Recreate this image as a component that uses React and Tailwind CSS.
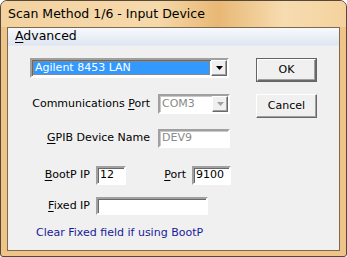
const font = { fontFamily: '"DejaVu Sans", Tahoma, sans-serif' };

const sunken =
  "border-2 border-t-[#a0a0a0] border-l-[#a0a0a0] border-b-white border-r-white shadow-[inset_1px_1px_0_#696969]";
const sunkenOff =
  "border-2 border-t-[#a0a0a0] border-l-[#a0a0a0] border-b-white border-r-white shadow-[inset_1px_1px_0_#c8c8c8]";

const Ul = ({ children }) => <span className="underline underline-offset-2">{children}</span>;

const Arrow = ({ off }) => (
  <div className="w-[16px] h-full flex items-center justify-center bg-[#f0f0f0] border border-t-white border-l-white border-b-[#696969] border-r-[#696969] shadow-[inset_-1px_-1px_0_#a0a0a0]">
    <svg width="7" height="4" viewBox="0 0 7 4">
      <path d="M0 0h7L3.5 4z" fill={off ? "#a0a0a0" : "#000"} />
    </svg>
  </div>
);

const Btn = ({ children, def }) => (
  <div
    className={`w-[61px] h-[24px] flex items-center justify-center text-[11px] text-black bg-[#f0f0f0] ${
      def ? "border border-[#646464]" : ""
    }`}
  >
    <div className="w-full h-full flex items-center justify-center border border-t-white border-l-white border-b-[#696969] border-r-[#696969] shadow-[inset_-1px_-1px_0_#a0a0a0]">
      {children}
    </div>
  </div>
);

export default function App() {
  return (
    <div
      style={font}
      className="w-[347px] h-[257px] flex flex-col bg-[#efc488] border border-[#55483a] rounded-t-[7px] rounded-b-[3px] overflow-hidden"
    >
      {/* title bar */}
      <div className="h-[26px] flex items-center pl-[7px] bg-[linear-gradient(90deg,#f3d2a0,#f6d9ab_45%,#e8b874_63%,#f7dcb1_82%,#f4d29d)]">
        <span className="text-[12.5px] text-black">Scan Method 1/6 - Input Device</span>
      </div>

      <div className="flex-1 flex px-[6px] pb-[5px]">
        <div className="flex-1 flex flex-col border border-[#7d6a4d] bg-[#f0f0f0]">
          {/* menu bar */}
          <div className="h-[18px] flex items-center pl-[7px] bg-[linear-gradient(180deg,#f7f9fc,#dfe6f3)] border-b border-[#e6e9f0]">
            <span className="text-[12.5px] text-black">
              <Ul>A</Ul>dvanced
            </span>
          </div>

          <div className="flex-1 flex text-[11px] text-black">
            {/* left column */}
            <div className="flex flex-col pl-[22px] pt-[12px]">
              <div className={`w-[199px] h-[20px] flex bg-white ${sunken}`}>
                <div className="flex-1 m-[1px] flex items-center pl-[2px] bg-[#3399ff] text-white outline-1 outline-dotted outline-[#d08020] -outline-offset-1">
                  Agilent 8453 LAN
                </div>
                <Arrow />
              </div>

              <div className="flex items-center mt-[16px] h-[20px]">
                <div className="w-[122px] text-right pr-[2px]">
                  Communications <Ul>P</Ul>ort
                </div>
                <div className={`ml-[6px] w-[72px] h-[20px] flex bg-white ${sunkenOff}`}>
                  <div className="flex-1 flex items-center pl-[2px] text-[#8a8a8a]">COM3</div>
                  <Arrow off />
                </div>
              </div>

              <div className="flex items-center mt-[15px] h-[19px]">
                <div className="w-[122px] text-right pr-[2px]">
                  <Ul>G</Ul>PIB Device Name
                </div>
                <div className={`ml-[6px] w-[72px] h-[19px] flex items-center pl-[2px] bg-white text-[#8a8a8a] ${sunkenOff}`}>
                  DEV9
                </div>
              </div>

              <div className="flex items-center mt-[18px] h-[19px]">
                <div className="w-[60px] text-right">
                  <Ul>B</Ul>ootP IP
                </div>
                <div className={`ml-[6px] w-[30px] h-[19px] flex items-center pl-[2px] bg-white ${sunken}`}>12</div>
                <div className="w-[60px] text-right">
                  <Ul>P</Ul>ort
                </div>
                <div className={`ml-[6px] w-[39px] h-[19px] flex items-center pl-[2px] bg-white ${sunken}`}>9100</div>
              </div>

              <div className="flex items-center mt-[12px] h-[18px]">
                <div className="w-[60px] text-right">
                  <Ul>F</Ul>ixed IP
                </div>
                <div className={`ml-[6px] w-[112px] h-[18px] bg-white ${sunken}`} />
              </div>

              <div className="mt-[10px] pl-[6px] text-[#1a1a9a]">Clear Fixed field if using BootP</div>
            </div>

            {/* right column */}
            <div className="flex flex-col gap-[12px] pl-[25px] pt-[12px]">
              <Btn def>OK</Btn>
              <Btn>Cancel</Btn>
            </div>
          </div>
        </div>
      </div>
    </div>
  );
}
